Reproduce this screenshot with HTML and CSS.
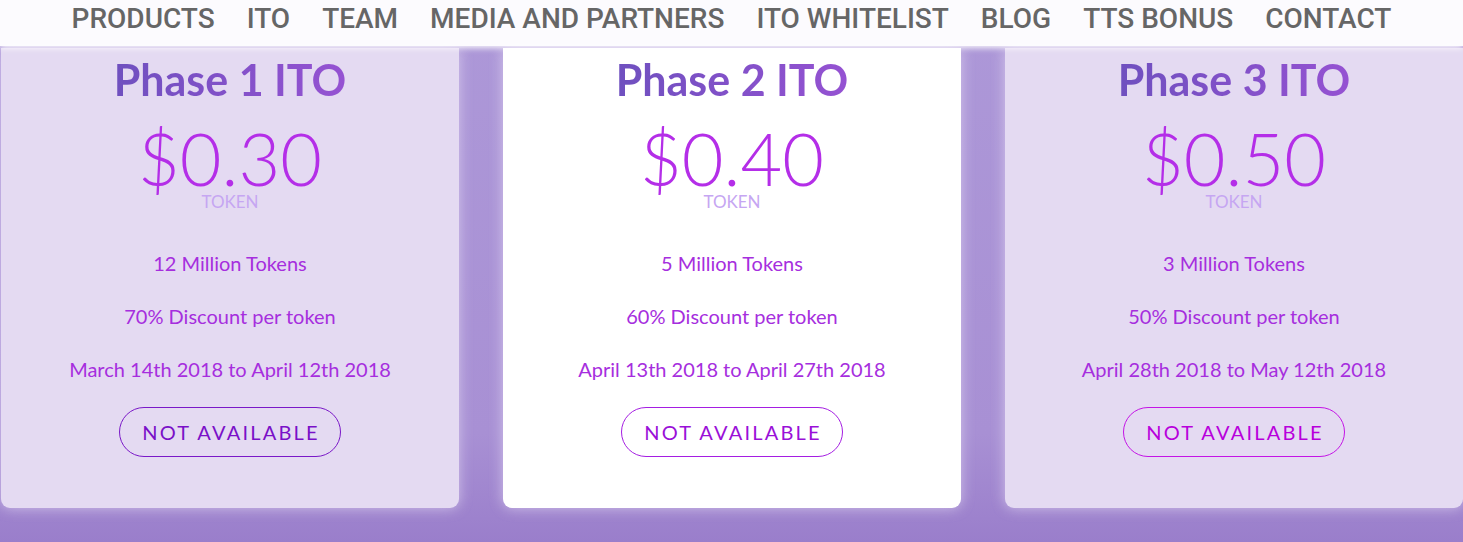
FILE: index.html
```html
<!DOCTYPE html>
<html lang="en">
<head>
    <meta charset="UTF-8">
    <meta name="viewport" content="width=device-width, initial-scale=1.0">
    <title>ITO Phases</title>
    <link rel="stylesheet" href="styles.css">
</head>
<body>

    <nav class="topnav">
        <a href="#">PRODUCTS</a>
        <a href="#">ITO</a>
        <a href="#">TEAM</a>
        <a href="#">MEDIA AND PARTNERS</a>
        <a href="#">ITO WHITELIST</a>
        <a href="#">BLOG</a>
        <a href="#">TTS BONUS</a>
        <a href="#">CONTACT</a>
    </nav>

    <div class="phases">
        <div class="phase">
            <h2 class="phase-title">Phase 1 ITO</h2>
            <div class="price">$0.30</div>
            <div class="unit">TOKEN</div>
            <p>12 Million Tokens</p>
            <p>70% Discount per token</p>
            <p>March 14th 2018 to April 12th 2018</p>
            <button class="na-btn btn-1">NOT AVAILABLE</button>
        </div>

        <div class="phase current">
            <h2 class="phase-title">Phase 2 ITO</h2>
            <div class="price">$0.40</div>
            <div class="unit">TOKEN</div>
            <p>5 Million Tokens</p>
            <p>60% Discount per token</p>
            <p>April 13th 2018 to April 27th 2018</p>
            <button class="na-btn btn-2">NOT AVAILABLE</button>
        </div>

        <div class="phase">
            <h2 class="phase-title">Phase 3 ITO</h2>
            <div class="price">$0.50</div>
            <div class="unit">TOKEN</div>
            <p>3 Million Tokens</p>
            <p>50% Discount per token</p>
            <p>April 28th 2018 to May 12th 2018</p>
            <button class="na-btn btn-3">NOT AVAILABLE</button>
        </div>
    </div>

</body>
</html>
```

FILE: styles.css
```css
body { margin: 0; height: 542px; overflow: hidden; font-family: Lato, "Open Sans", sans-serif; background: linear-gradient(to bottom, #ad98d8 0%, #a890d4 80%, #9a7ecb 100%); }

.topnav { position: relative; z-index: 2; height: 46px; display: flex; justify-content: center; gap: 32px; background: rgba(255, 255, 255, 0.96); box-shadow: 0 2px 6px rgba(255, 255, 255, 0.9); }
.topnav a { font-family: "Roboto", sans-serif; font-weight: 500; font-size: 28px; line-height: 38px; color: #666; text-decoration: none; }

.phases { display: flex; gap: 44px; margin: 2px 0 0 1px; }
.phase { flex: 0 0 458px; height: 460px; box-sizing: border-box; padding-top: 6px; background: #e4daf2; border-radius: 0 0 9px 9px; text-align: center; box-shadow: 0 0 14px rgba(230, 220, 245, 0.7); }
.phase.current { background: #fff; }

.phase-title { margin: 0; font-size: 43px; font-weight: 700; line-height: 52px; color: #7a52c6; background: linear-gradient(to right, #6f50bf, #9552d2); -webkit-background-clip: text; background-clip: text; -webkit-text-fill-color: transparent; display: inline-block; }
.price { margin-top: 17px; font-size: 72px; font-weight: 300; line-height: 70px; color: #b42ee8; }
.unit { font-size: 17px; line-height: 18px; color: #c6a6f2; }
.phase p { margin: 0; font-size: 20px; line-height: 53px; color: #a62ede; }
.phase p:first-of-type { margin-top: 26px; }

.na-btn { margin-top: 11px; width: 222px; height: 50px; border-radius: 25px; background: transparent; font-family: Lato, "Open Sans", sans-serif; font-size: 20px; letter-spacing: 2.2px; padding: 0 0 0 2px; cursor: pointer; }
.btn-1 { border: 1px solid #7a18c8; color: #7a10c8; }
.btn-2 { border: 1px solid #a51ee2; color: #9a10d8; }
.btn-3 { border: 1px solid #c414e6; color: #b800dc; }
```
